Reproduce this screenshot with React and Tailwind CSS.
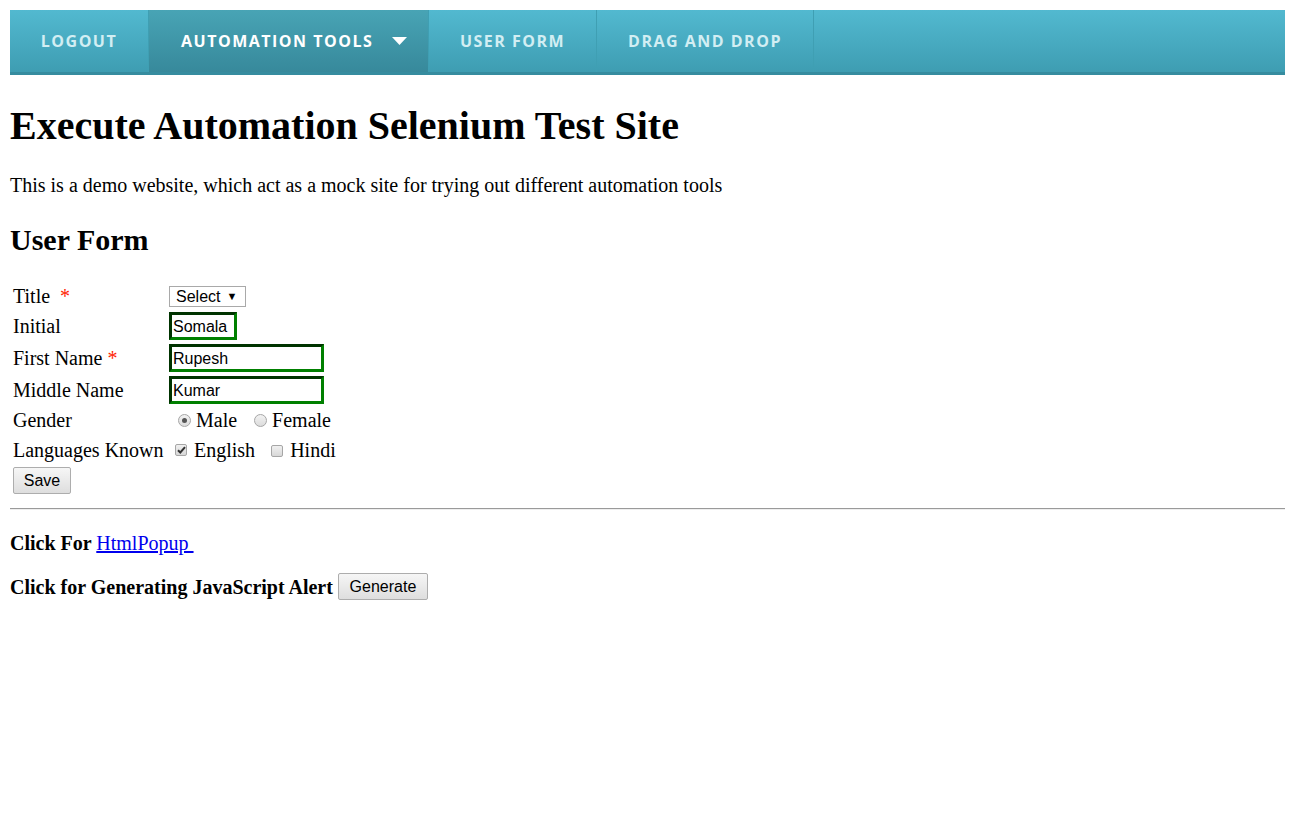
export default function App() {
  const serif = { fontFamily: '"Liberation Serif", "Times New Roman", serif' };
  return (
    <div className="min-h-screen bg-white px-[10px] pt-[10px] text-black" style={serif}>
      <Nav />
      <h1 className="mt-[28px] text-[40px] font-bold leading-[46px]">Execute Automation Selenium Test Site</h1>
      <p className="mt-[25px] text-[20px] leading-[23px]">
        This is a demo website, which act as a mock site for trying out different automation tools
      </p>
      <h2 className="mt-[26px] text-[30px] font-bold leading-[34px]">User Form</h2>
      <UserForm />
      <div className="mt-[14px] border-t border-b border-t-[#9a9a9a] border-b-[#eeeeee]" />
      <p className="mt-[21px] text-[20px] font-bold leading-[24px]">
        Click For{" "}
        <a href="#" className="font-normal text-[#0000ee] underline">HtmlPopup&nbsp;</a>
      </p>
      <div className="mt-[18px] flex items-center gap-[5px] text-[20px] font-bold leading-[24px]">
        <span>Click for Generating JavaScript Alert</span>
        <Button className="w-[90px]">Generate</Button>
      </div>
    </div>
  );
}

function Nav() {
  const items = [
    { label: "LOGOUT", w: "w-[139px] justify-center" },
    { label: "AUTOMATION TOOLS", w: "w-[280px] justify-start pl-[32px]", active: true },
    { label: "USER FORM", w: "w-[168px] justify-center" },
    { label: "DRAG AND DROP", w: "w-[217px] justify-center" },
  ];
  return (
    <nav
      className="flex h-[65px] border-b-[3px] border-[#368c9f] bg-gradient-to-b from-[#52b9d0] to-[#3e9db2]"
      style={{ fontFamily: '"Open Sans", sans-serif' }}
    >
      {items.map((it) => (
        <div
          key={it.label}
          className={`flex h-full items-center border-r border-[#3f9fb3] text-[16px] font-bold tracking-[1.5px] ${it.w} ${
            it.active ? "bg-gradient-to-b from-[#48a4b5] to-[#37899b] text-white" : "text-[#d2eef3]"
          }`}
        >
          <span>{it.label}</span>
          {it.active && (
            <svg width="15" height="8" viewBox="0 0 15 8" className="ml-[19px]">
              <path d="M0 0h15L7.5 8z" fill="#fff" />
            </svg>
          )}
        </div>
      ))}
    </nav>
  );
}

function Button({ children, className = "" }) {
  return (
    <button
      className={`h-[27px] rounded-[2px] border border-[#adadad] bg-gradient-to-b from-[#f6f6f6] to-[#dedede] text-[16px] font-normal text-black ${className}`}
      style={{ fontFamily: '"Liberation Sans", Arial, sans-serif' }}
    >
      {children}
    </button>
  );
}

function TextBox({ value, w }) {
  return (
    <div
      className={`flex h-[28px] items-center border-[3px] border-t-[#003300] border-l-[#003300] border-r-[#008000] border-b-[#008000] pl-[1px] text-[16px] ${w}`}
      style={{ fontFamily: '"Liberation Sans", Arial, sans-serif' }}
    >
      {value}
    </div>
  );
}

function Radio({ checked }) {
  return (
    <span className="inline-flex h-[13px] w-[13px] items-center justify-center rounded-full border border-[#a6a6a6] bg-gradient-to-b from-[#f2f2f2] to-[#dcdcdc]">
      {checked && <span className="h-[5px] w-[5px] rounded-full bg-[#555]" />}
    </span>
  );
}

function Check({ checked }) {
  return (
    <span className="inline-flex h-[12px] w-[12px] items-center justify-center rounded-[2px] border border-[#a6a6a6] bg-gradient-to-b from-[#f0f0f0] to-[#d8d8d8]">
      {checked && (
        <svg width="9" height="8" viewBox="0 0 9 8">
          <path d="M1 4.2l2.3 2.3L8 1.2" stroke="#333" strokeWidth="2" fill="none" />
        </svg>
      )}
    </span>
  );
}

function UserForm() {
  const star = <span className="text-[#ff2200]">*</span>;
  return (
    <div className="mt-[27px] grid grid-cols-[156px_auto] gap-y-[4px] pl-[3px] text-[20px] leading-[23px]">
      <div className="flex h-[24px] items-center">Title&nbsp;&nbsp;{star}</div>
      <div className="flex h-[24px] items-center">
        <div
          className="flex h-[21px] w-[77px] items-center gap-[6px] border border-[#a9a9a9] bg-white pl-[6px] text-[16px]"
          style={{ fontFamily: '"Liberation Sans", Arial, sans-serif' }}
        >
          Select <span className="text-[11px]">▼</span>
        </div>
      </div>

      <div className="flex h-[28px] items-center">Initial</div>
      <TextBox value="Somala" w="w-[68px]" />

      <div className="flex h-[28px] items-center">First Name&nbsp;{star}</div>
      <TextBox value="Rupesh" w="w-[155px]" />

      <div className="flex h-[28px] items-center">Middle Name</div>
      <TextBox value="Kumar" w="w-[155px]" />

      <div className="flex h-[24px] items-center">Gender</div>
      <div className="flex h-[24px] items-center pl-[9px]">
        <Radio checked />
        <span className="ml-[5px]">Male</span>
        <span className="ml-[17px]"><Radio /></span>
        <span className="ml-[5px]">Female</span>
      </div>

      <div className="flex h-[28px] items-center">Languages Known</div>
      <div className="flex h-[28px] items-center pl-[6px]">
        <Check checked />
        <span className="ml-[7px]">English</span>
        <span className="ml-[16px]"><Check /></span>
        <span className="ml-[7px]">Hindi</span>
      </div>

      <div className="col-span-2 -mt-[1px]">
        <Button className="w-[58px]">Save</Button>
      </div>
    </div>
  );
}
